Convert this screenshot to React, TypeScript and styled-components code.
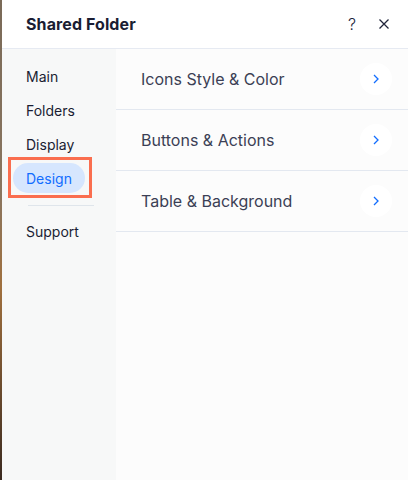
import * as React from "react";
import styled, { createGlobalStyle } from "styled-components";

const Global = createGlobalStyle`
html, body, #root {
  margin: 0;
  padding: 0;
  height: 100%;
  overflow: hidden;
  font-family: Inter, "Noto Sans", sans-serif;
  box-sizing: border-box;
}
*, *::before, *::after { box-sizing: inherit; }
`

const Backdrop = styled.div`
  height: 100%;
  display: flex;
  background: linear-gradient(180deg, #7a6a58 0%, #8a7660 40%, #a0703e 60%, #3a2a20 100%);
  padding-left: 2px;
`

const Panel = styled.div`
  flex: 1;
  display: flex;
  flex-direction: column;
  background: #fff;
`

const Header = styled.div`
  height: 49px;
  flex-shrink: 0;
  display: flex;
  align-items: center;
  padding: 0 8px 0 24px;
  border-bottom: 1px solid #e6eaf2;
`

const Title = styled.h1`
  flex: 1;
  margin: 0;
  font-size: 16px;
  font-weight: 700;
  color: #1a1d33;
  letter-spacing: 0.1px;
`

const HeaderButton = styled.button`
  width: 32px;
  height: 32px;
  border: none;
  background: none;
  padding: 0;
  display: flex;
  align-items: center;
  justify-content: center;
  color: #20243a;
  font-family: Inter, sans-serif;
  font-weight: 300;
  font-size: 16px;
  cursor: pointer;
`

const Body = styled.div`
  flex: 1;
  display: flex;
`

const Sidebar = styled.nav`
  width: 114px;
  flex-shrink: 0;
  background: #f7f8f8;
  padding: 10px 0 0 0;
  display: flex;
  flex-direction: column;
`

const NavItem = styled.div<{ $active?: boolean }>`
  height: 30px;
  margin: ${p => (p.$active ? "0 0 0 2px" : "2px 0 2px 11px")};
  padding: 0 13px;
  align-self: flex-start;
  display: flex;
  align-items: center;
  border-radius: 15px;
  font-size: 14px;
  color: ${p => (p.$active ? "#116dff" : "#1a1d33")};
  background: ${p => (p.$active ? "#d6e6fe" : "transparent")};
`

const Highlight = styled.div`
  margin: -4px 0 0 6px;
  width: 84px;
  padding: 3px 0 2px 0;
  border: 3px solid #fa6e4f;
  display: flex;
`

const Divider = styled.div`
  height: 1px;
  width: 66px;
  margin: 7px 0 8px 26px;
  background: #dfe5eb;
`

const Content = styled.div`
  flex: 1;
  background: #fcfcfc;
  display: flex;
  flex-direction: column;
`

const Row = styled.div`
  height: 61px;
  display: flex;
  align-items: center;
  padding: 0 16px 0 25px;
  border-bottom: 1px solid #e3e8f0;
`

const RowLabel = styled.span`
  flex: 1;
  font-size: 16px;
  color: #3b3f55;
`

const Chevron = styled.span`
  width: 32px;
  height: 32px;
  border-radius: 50%;
  background: #fff;
  display: flex;
  align-items: center;
  justify-content: center;
  color: #116dff;
`

const rows = ["Icons Style & Color", "Buttons & Actions", "Table & Background"];

export default function App() {
  return (
    <Backdrop>
      <Global />
      <Panel>
        <Header>
          <Title>Shared Folder</Title>
          <HeaderButton>?</HeaderButton>
          <HeaderButton>
            <svg width="12" height="12" viewBox="0 0 12 12" fill="none" stroke="currentColor" strokeWidth="1.3">
              <path d="M1.5 1.5l9 9M10.5 1.5l-9 9" />
            </svg>
          </HeaderButton>
        </Header>
        <Body>
          <Sidebar>
            <NavItem>Main</NavItem>
            <NavItem>Folders</NavItem>
            <NavItem>Display</NavItem>
            <Highlight>
              <NavItem $active>Design</NavItem>
            </Highlight>
            <Divider />
            <NavItem>Support</NavItem>
          </Sidebar>
          <Content>
            {rows.map(r => (
              <Row key={r}>
                <RowLabel>{r}</RowLabel>
                <Chevron>
                  <svg width="6" height="10" viewBox="0 0 6 10" fill="none" stroke="currentColor" strokeWidth="1.3">
                    <path d="M1 1l4 4-4 4" />
                  </svg>
                </Chevron>
              </Row>
            ))}
          </Content>
        </Body>
      </Panel>
    </Backdrop>
  );
}
